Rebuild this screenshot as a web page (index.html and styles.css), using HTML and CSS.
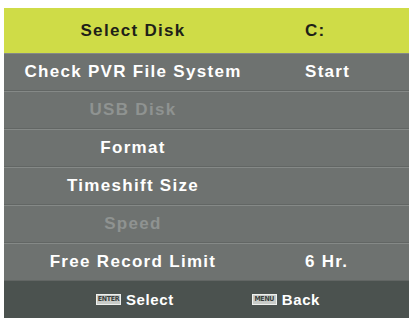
FILE: index.html
```html
<!DOCTYPE html>
<html lang="en">
<head>
  <meta charset="UTF-8">
  <title>PVR File System</title>
  <link rel="stylesheet" href="styles.css">
</head>
<body>
  <div class="menu">
    <div class="row head">
      <span class="label">Select Disk</span>
      <span class="value">C:</span>
    </div>
    <div class="row">
      <span class="label">Check PVR File System</span>
      <span class="value">Start</span>
    </div>
    <div class="row off">
      <span class="label">USB Disk</span>
      <span class="value"></span>
    </div>
    <div class="row">
      <span class="label">Format</span>
      <span class="value"></span>
    </div>
    <div class="row">
      <span class="label">Timeshift Size</span>
      <span class="value"></span>
    </div>
    <div class="row off">
      <span class="label">Speed</span>
      <span class="value"></span>
    </div>
    <div class="row">
      <span class="label">Free Record Limit</span>
      <span class="value">6 Hr.</span>
    </div>

    <!-- key hints -->
    <div class="footer">
      <span class="hint"><span class="key">ENTER</span>Select</span>
      <span class="hint"><span class="key">MENU</span>Back</span>
    </div>
  </div>
</body>
</html>
```

FILE: styles.css
```css
* {
  margin: 0;
  padding: 0;
  box-sizing: border-box;
}

body {
  background: #fff;
  font-family: 'Liberation Sans', Arial, sans-serif;
  font-weight: bold;
  padding: 8px 0 2px 4px;
}

.menu {
  width: 405px;
  background: #6e7270;
}

.row {
  display: flex;
  align-items: center;
  height: 38px;
  color: #fff;
  font-size: 17px;
  letter-spacing: 1.3px;
  border-top: 1px solid #858987;
  border-bottom: 1px solid #626664;
}

.row .label {
  width: 258px;
  text-align: center;
}

.row .value {
  padding-left: 43px;
}

.row.head {
  height: 45px;
  background: #cfdc47;
  color: #1e2118;
  border: none;
}

.row.off {
  color: #8f9391;
}

.footer {
  display: flex;
  align-items: center;
  height: 37px;
  background: #4b524f;
  color: #fff;
  font-size: 15px;
  letter-spacing: 0.6px;
  padding-left: 92px;
  gap: 78px;
}

.hint {
  display: flex;
  align-items: center;
}

.key {
  display: inline-block;
  width: 25px;
  height: 11px;
  background: #c9ccc9;
  border: 1px solid #eef0ee;
  color: #3a3f3c;
  font-family: 'DejaVu Sans Condensed', 'Liberation Sans Narrow', sans-serif;
  font-size: 7px;
  letter-spacing: -0.3px;
  line-height: 9px;
  text-align: center;
  margin-right: 5px;
}
```
